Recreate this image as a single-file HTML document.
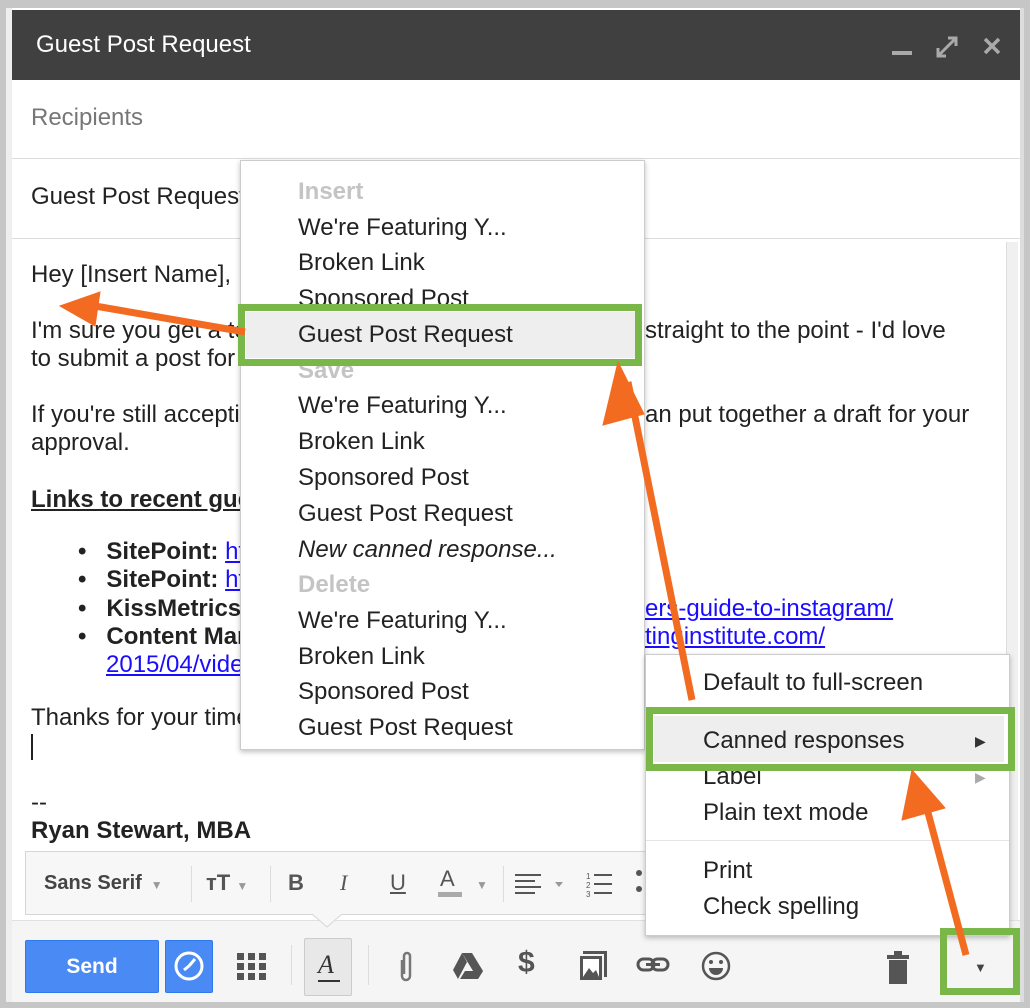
<!DOCTYPE html>
<html><head><meta charset="utf-8"><style>
*{margin:0;padding:0;box-sizing:border-box}
body{width:1030px;height:1008px;position:relative;background:#fff;font-family:"Liberation Sans",Arial,sans-serif;color:#222;overflow:hidden}
.a{position:absolute;white-space:nowrap}
.t{font-size:24px;line-height:28px}
.b{font-weight:bold}
.lnk{color:#1a0dff;text-decoration:underline}
.m{font-size:24px;line-height:28px;color:#222}
.h{color:#c4c4c4;font-weight:bold}
</style></head><body>
<div class="a" style="left:0;top:0;width:1030px;height:1008px;border:6px solid #c6c6c6;border-top-width:8px"></div>
<div class="a" style="left:6px;top:8px;width:6px;height:994px;background:#eee"></div>
<div class="a" style="left:1020px;top:8px;width:4px;height:994px;background:#ddd"></div>
<div class="a" style="left:12px;top:10px;width:1008px;height:70px;background:#404040"></div>
<div class="a" style="left:36px;top:31px;font-size:24px;color:#fff;line-height:28px">Guest Post Request</div>
<div class="a" style="left:892px;top:51px;width:20px;height:4px;background:#aaa"></div>
<svg class="a" style="left:934px;top:34px" width="26" height="26" viewBox="0 0 26 26"><path d="M4 22 L22 4 M14 4 H22 V12 M4 14 V22 H12" stroke="#aaa" stroke-width="3" fill="none"/></svg>
<svg class="a" style="left:982px;top:36px" width="20" height="20"><path d="M3 3 L17 17 M17 3 L3 17" stroke="#aaa" stroke-width="3.5"/></svg>
<div class="a" style="left:12px;top:158px;width:1008px;height:1px;background:#ddd"></div>
<div class="a" style="left:12px;top:238px;width:1008px;height:1px;background:#ddd"></div>
<div class="a t" style="left:31px;top:104px;color:#777">Recipients</div>
<div class="a t" style="left:31px;top:183px">Guest Post Request</div>
<div class="a" style="left:1006px;top:242px;width:12px;height:680px;background:#f0f0f0;border-left:1px solid #ddd"></div>
<div class="a t" style="left:31px;top:261px">Hey [Insert Name],</div>
<div class="a t" style="left:31px;top:317px">I'm sure you get a ton of these</div>
<div class="a t" style="left:645px;top:317px">straight to the point - I'd love</div>
<div class="a t" style="left:31px;top:345px">to submit a post for you</div>
<div class="a t" style="left:31px;top:401px">If you're still accepting</div>
<div class="a t" style="left:645px;top:401px">an put together a draft for your</div>
<div class="a t" style="left:31px;top:429px">approval.</div>
<div class="a t b" style="left:31px;top:486px;text-decoration:underline">Links to recent guest posts</div>
<div class="a t b" style="left:78px;top:538px">•&nbsp;&nbsp;&nbsp;SitePoint: <span class="lnk" style="font-weight:normal">http</span></div>
<div class="a t b" style="left:78px;top:566px">•&nbsp;&nbsp;&nbsp;SitePoint: <span class="lnk" style="font-weight:normal">http</span></div>
<div class="a t b" style="left:78px;top:595px">•&nbsp;&nbsp;&nbsp;KissMetrics</div>
<div class="a t b" style="left:78px;top:623px">•&nbsp;&nbsp;&nbsp;Content Marketing</div>
<div class="a t lnk" style="left:645px;top:595px">ers-guide-to-instagram/</div>
<div class="a t lnk" style="left:645px;top:623px">tinginstitute.com/</div>
<div class="a t lnk" style="left:106px;top:651px">2015/04/video</div>
<div class="a t" style="left:31px;top:704px">Thanks for your time</div>
<div class="a" style="left:31px;top:734px;width:2px;height:26px;background:#222"></div>
<div class="a t" style="left:31px;top:789px">--</div>
<div class="a t b" style="left:31px;top:817px">Ryan Stewart, MBA</div>
<div class="a" style="left:25px;top:851px;width:625px;height:64px;background:#f7f7f7;border:1px solid #d6d6d6"></div>
<div class="a" style="left:44px;top:872px;font-size:20px;font-weight:bold;color:#444">Sans Serif <span style="color:#999;font-size:12px">&nbsp;▼</span></div>
<div class="a" style="left:191px;top:866px;width:1px;height:36px;background:#ddd"></div>
<div class="a" style="left:206px;top:870px;font-size:22px;font-weight:bold;color:#555">ᴛT <span style="color:#999;font-size:12px">▼</span></div>
<div class="a" style="left:270px;top:866px;width:1px;height:36px;background:#ddd"></div>
<div class="a" style="left:288px;top:870px;font-size:22px;font-weight:bold;color:#555">B</div>
<div class="a" style="left:340px;top:870px;font-size:22px;font-style:italic;font-family:'Liberation Serif',serif;color:#555">I</div>
<div class="a" style="left:390px;top:870px;font-size:22px;text-decoration:underline;color:#555">U</div>
<div class="a" style="left:440px;top:866px;font-size:22px;color:#555">A</div>
<div class="a" style="left:438px;top:892px;width:24px;height:5px;background:#aaa"></div>
<div class="a" style="left:476px;top:878px;font-size:12px;color:#999">▼</div>
<div class="a" style="left:503px;top:866px;width:1px;height:36px;background:#ddd"></div>
<svg class="a" style="left:515px;top:872px" width="56" height="24"><path d="M0 3H26M0 9H20M0 15H26M0 21H20" stroke="#555" stroke-width="2"/><path d="M40 10l4 5 4-5z" fill="#999"/></svg>
<svg class="a" style="left:586px;top:870px" width="30" height="28"><text x="0" y="9" font-size="8" fill="#555" font-family="Liberation Sans">1</text><text x="0" y="18" font-size="8" fill="#555" font-family="Liberation Sans">2</text><text x="0" y="27" font-size="8" fill="#555" font-family="Liberation Sans">3</text><path d="M8 5H26M8 14H26M8 23H26" stroke="#555" stroke-width="2"/></svg>
<div class="a" style="left:636px;top:870px;width:6px;height:6px;border-radius:3px;background:#555"></div>
<div class="a" style="left:636px;top:886px;width:6px;height:6px;border-radius:3px;background:#555"></div>
<div class="a" style="left:12px;top:920px;width:1008px;height:82px;background:#f5f5f5;border-top:1px solid #e0e0e0"></div>
<svg class="a" style="left:312px;top:912px" width="30" height="16"><path d="M0 2 L15 15 L30 2" fill="#f7f7f7" stroke="#d6d6d6"/><rect x="0" y="0" width="30" height="2" fill="#f7f7f7"/></svg>
<div class="a" style="left:25px;top:940px;width:134px;height:53px;background:#4a8af4;border:1px solid #3079ed;border-radius:2px;color:#fff;font-weight:bold;font-size:21px;text-align:center;line-height:51px">Send</div>
<div class="a" style="left:165px;top:940px;width:48px;height:53px;background:#4a8af4;border:1px solid #3079ed;border-radius:2px"></div>
<svg class="a" style="left:173px;top:950px" width="32" height="32"><circle cx="16" cy="16" r="13" fill="none" stroke="#fff" stroke-width="3"/><path d="M16 16 L22 9 M16 16 L11 20" stroke="#fff" stroke-width="3"/></svg>
<svg class="a" style="left:236px;top:952px" width="32" height="30" fill="#555"><rect x="1" y="1" width="7" height="7"/><rect x="12" y="1" width="7" height="7"/><rect x="23" y="1" width="7" height="7"/><rect x="1" y="11" width="7" height="7"/><rect x="12" y="11" width="7" height="7"/><rect x="23" y="11" width="7" height="7"/><rect x="1" y="21" width="7" height="7"/><rect x="12" y="21" width="7" height="7"/><rect x="23" y="21" width="7" height="7"/></svg>
<div class="a" style="left:291px;top:945px;width:1px;height:40px;background:#ddd"></div>
<div class="a" style="left:304px;top:938px;width:48px;height:58px;background:#e8e8e8;border:1px solid #ccc;border-radius:2px"></div>
<div class="a" style="left:318px;top:950px;font-size:26px;font-style:italic;font-family:'Liberation Serif',serif;color:#333">A</div>
<div class="a" style="left:318px;top:980px;width:22px;height:2px;background:#333"></div>
<div class="a" style="left:368px;top:945px;width:1px;height:40px;background:#ddd"></div>
<svg class="a" style="left:396px;top:950px" width="20" height="34"><path d="M6 10 V26 a4 4 0 0 0 8 0 V6 a3 3 0 0 0 -6 0 V24" fill="none" stroke="#777" stroke-width="2.5"/></svg>
<svg class="a" style="left:452px;top:952px" width="32" height="28"><path d="M10 1 H20 L31 19 L26 27 Z" fill="#555"/><path d="M10 1 L1 18 L6 27 L15 10 Z" fill="#555"/><path d="M8 27 H26 L31 19 H13 Z" fill="#555"/></svg>
<div class="a" style="left:518px;top:946px;font-size:30px;font-weight:bold;color:#555">$</div>
<svg class="a" style="left:578px;top:950px" width="30" height="32"><rect x="5" y="1" width="24" height="26" fill="#555"/><rect x="1" y="5" width="24" height="26" fill="#555" stroke="#f5f5f5" stroke-width="2"/><rect x="5" y="9" width="16" height="18" fill="#fff"/><path d="M5 27 L11 18 L15 23 L18 20 L21 27 Z" fill="#555"/></svg>
<svg class="a" style="left:636px;top:955px" width="34" height="20"><rect x="2" y="4" width="16" height="11" rx="5.5" fill="none" stroke="#555" stroke-width="3"/><rect x="16" y="4" width="16" height="11" rx="5.5" fill="none" stroke="#555" stroke-width="3"/><rect x="10" y="8" width="14" height="3" fill="#555"/></svg>
<svg class="a" style="left:700px;top:950px" width="32" height="32"><circle cx="16" cy="16" r="13" fill="none" stroke="#555" stroke-width="2.5"/><circle cx="11" cy="12" r="2" fill="#555"/><circle cx="21" cy="12" r="2" fill="#555"/><path d="M9 18 H23 a7 7 0 0 1 -14 0z" fill="#555"/></svg>
<svg class="a" style="left:885px;top:950px" width="26" height="34" fill="#555"><rect x="9" y="1" width="8" height="4"/><rect x="2" y="5" width="22" height="4"/><rect x="4" y="10" width="18" height="24"/></svg>
<div class="a" style="left:974px;top:960px;font-size:13px;color:#444">▼</div>
<div class="a" style="left:240px;top:160px;width:405px;height:590px;background:#fff;border:1px solid #ccc;box-shadow:0 2px 5px rgba(0,0,0,.25)"></div>
<div class="a" style="left:246px;top:312px;width:390px;height:46px;background:#eee"></div>
<div class="a m h" style="left:298px;top:178px">Insert</div>
<div class="a m" style="left:298px;top:214px">We're Featuring Y...</div>
<div class="a m" style="left:298px;top:249px">Broken Link</div>
<div class="a m" style="left:298px;top:285px;height:22px;overflow:hidden">Sponsored Post</div>
<div class="a m" style="left:298px;top:321px">Guest Post Request</div>
<div class="a m h" style="left:298px;top:357px">Save</div>
<div class="a m" style="left:298px;top:392px">We're Featuring Y...</div>
<div class="a m" style="left:298px;top:428px">Broken Link</div>
<div class="a m" style="left:298px;top:464px">Sponsored Post</div>
<div class="a m" style="left:298px;top:500px">Guest Post Request</div>
<div class="a m" style="left:298px;top:536px;font-style:italic">New canned response...</div>
<div class="a m h" style="left:298px;top:571px">Delete</div>
<div class="a m" style="left:298px;top:607px">We're Featuring Y...</div>
<div class="a m" style="left:298px;top:643px">Broken Link</div>
<div class="a m" style="left:298px;top:678px">Sponsored Post</div>
<div class="a m" style="left:298px;top:714px">Guest Post Request</div>
<div class="a" style="left:238px;top:304px;width:404px;height:62px;border:7px solid #79b748"></div>
<div class="a" style="left:645px;top:654px;width:365px;height:282px;background:#fff;border:1px solid #ccc;box-shadow:0 2px 5px rgba(0,0,0,.25)"></div>
<div class="a" style="left:654px;top:716px;width:350px;height:46px;background:#eee"></div>
<div class="a m" style="left:703px;top:669px">Default to full-screen</div>
<div class="a m" style="left:703px;top:727px">Canned responses</div>
<div class="a" style="left:975px;top:733px;font-size:14px;color:#333">▶</div>
<div class="a m" style="left:703px;top:763px">Label</div>
<div class="a" style="left:975px;top:769px;font-size:14px;color:#aaa">▶</div>
<div class="a m" style="left:703px;top:799px">Plain text mode</div>
<div class="a" style="left:646px;top:840px;width:363px;height:1px;background:#e5e5e5"></div>
<div class="a m" style="left:703px;top:857px">Print</div>
<div class="a m" style="left:703px;top:893px">Check spelling</div>
<div class="a" style="left:646px;top:707px;width:369px;height:64px;border:7px solid #79b748"></div>
<div class="a" style="left:940px;top:928px;width:80px;height:67px;border:7px solid #79b748"></div>
<svg class="a" style="left:0;top:0" width="1030" height="1008">
<g stroke="#f26b21" stroke-width="7" fill="#f26b21">
<line x1="245" y1="332" x2="95" y2="306"/>
<polygon points="60,306 100,292 95,326" stroke-width="1"/>
<line x1="692" y1="700" x2="628" y2="382"/>
<polygon points="618,362 603,425 644,414" stroke-width="1"/>
<line x1="966" y1="955" x2="922" y2="790"/>
<polygon points="912,770 902,820 945,808" stroke-width="1"/>
</g>
</svg>
</body></html>
